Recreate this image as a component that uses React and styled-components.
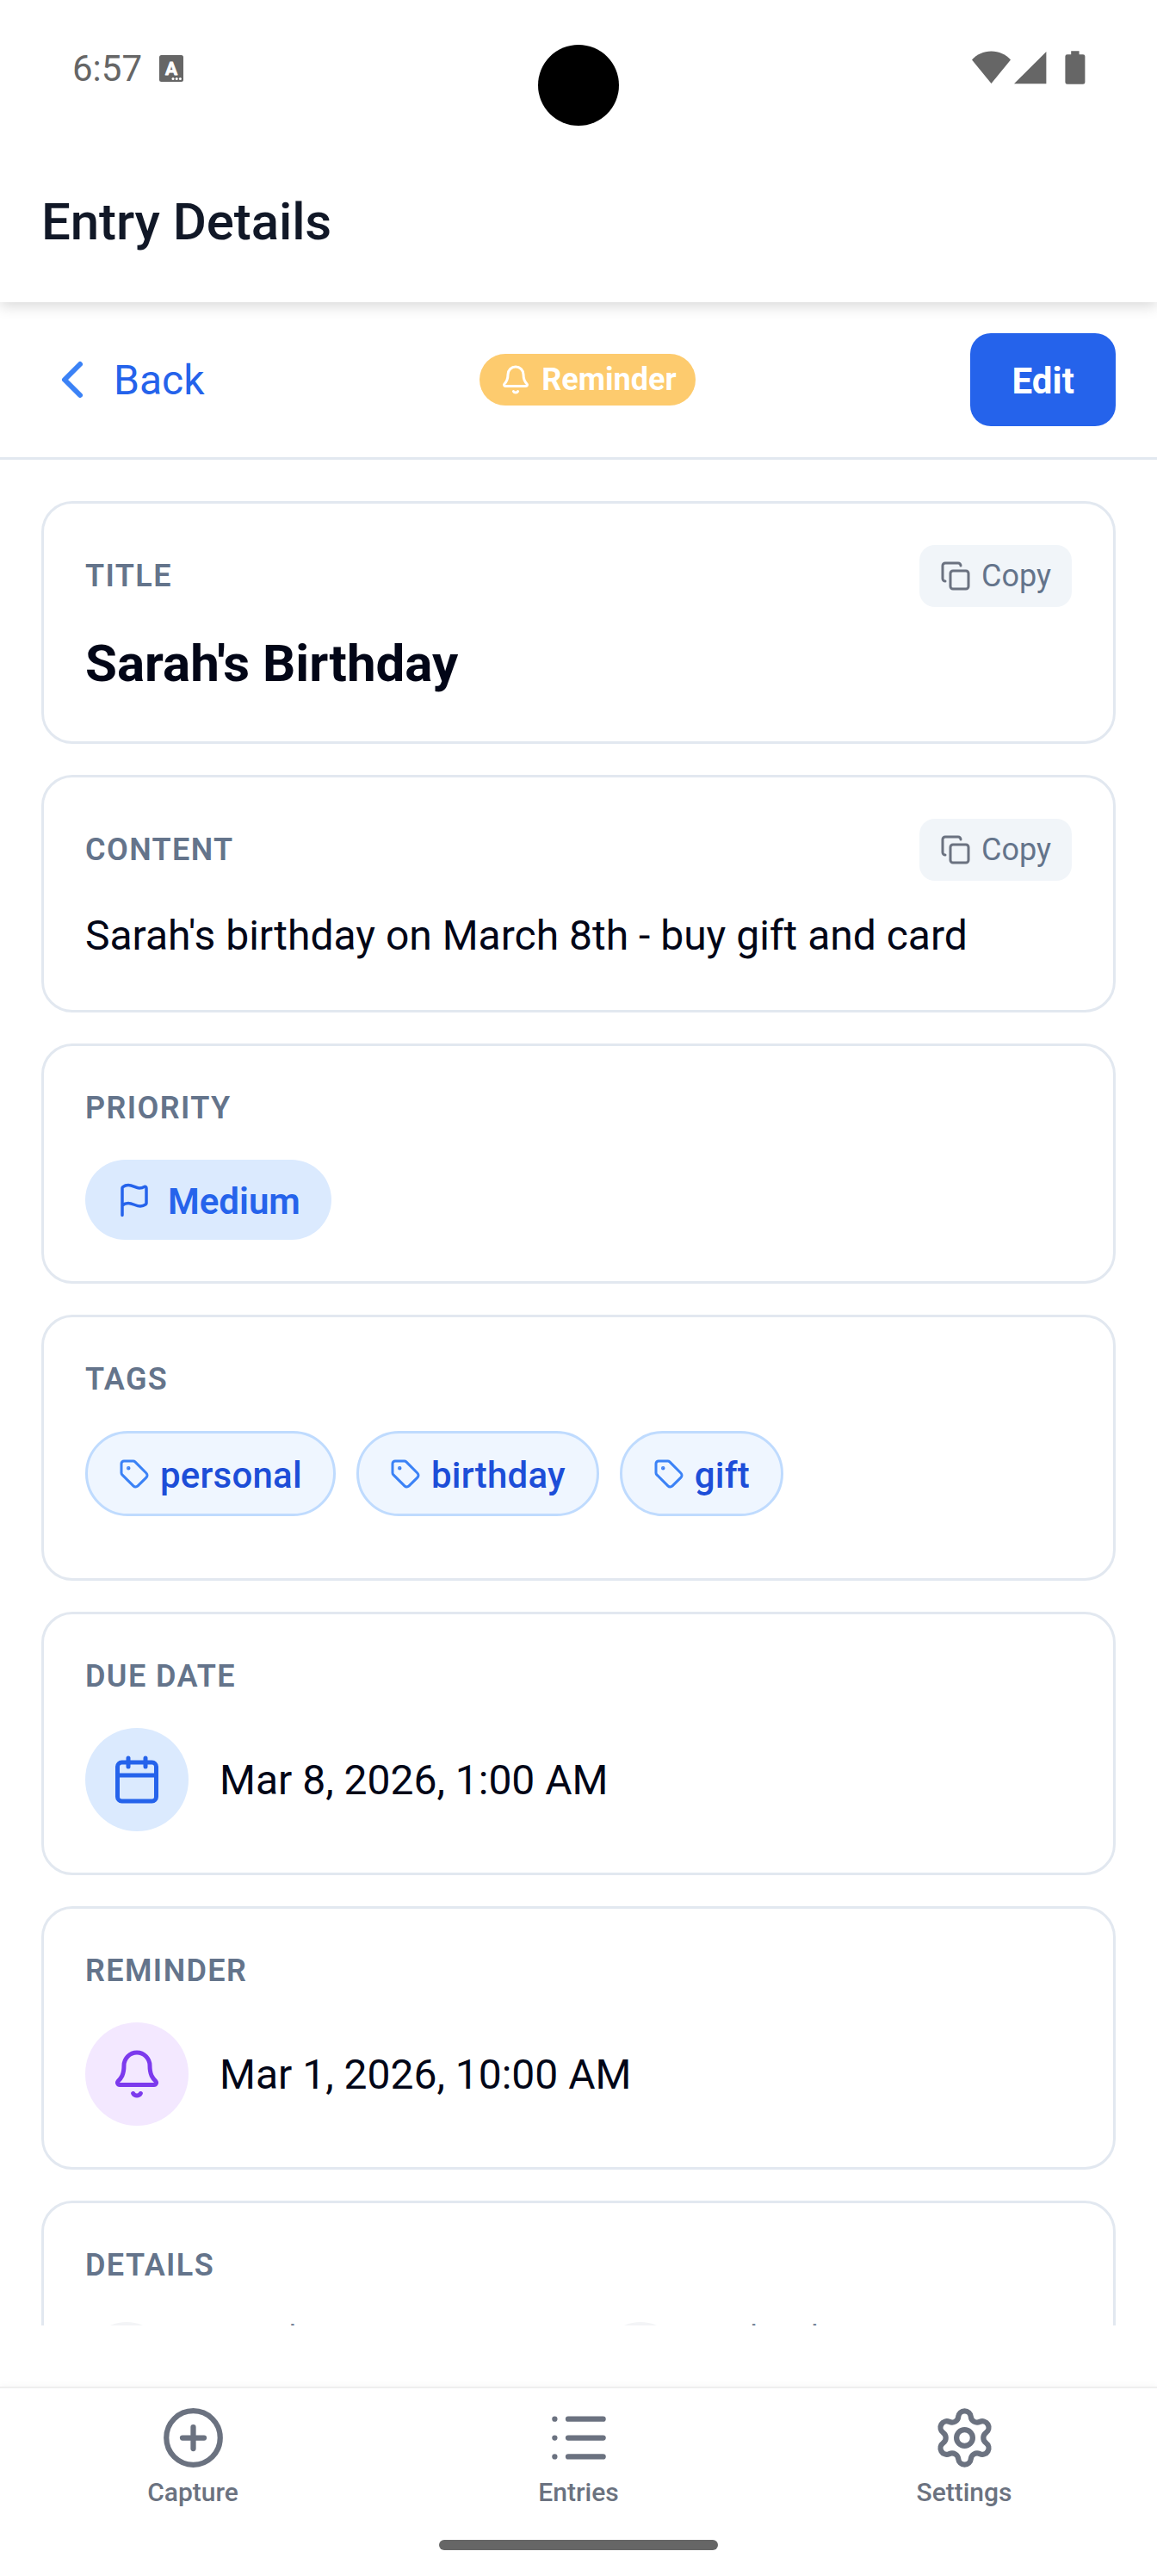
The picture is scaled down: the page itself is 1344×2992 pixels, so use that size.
import React from 'react'
import styled, { createGlobalStyle } from 'styled-components'
import { Bell, Calendar, ChevronLeft, CirclePlus, Copy, Flag, List, Settings, Tag } from 'lucide-react'

const GlobalStyle = createGlobalStyle`
    * {
        box-sizing: border-box;
    }
    body {
        margin: 0;
        background: #ffffff;
        font-family: Roboto, "Liberation Sans", sans-serif;
    }
    svg {
        display: block;
        flex-shrink: 0;
    }
`

const tags = ['personal', 'birthday', 'gift']

const tabs = [
    { label: 'Capture', Icon: CirclePlus },
    { label: 'Entries', Icon: List },
    { label: 'Settings', Icon: Settings },
]

// wifi, signal, battery
const StatusIcons = () => (
    <svg width="132" height="40" viewBox="0 0 132 40" fill="#666666">
        <path d="M0 10.6C5.6 4.2 13.4 0.5 22.5 0.5S39.4 4.2 45 10.6L22.5 38Z" />
        <path d="M49 38.2L86.4 1V38.2Z" />
        <path d="M115.2 0.2h9.4v4h4.4a2.4 2.4 0 0 1 2.4 2.4v29.8a2.4 2.4 0 0 1-2.4 2.4h-18.2a2.4 2.4 0 0 1-2.4-2.4V6.6a2.4 2.4 0 0 1 2.4-2.4h4.4z" />
    </svg>
)

const KeyboardIcon = () => (
    <svg width="28" height="31" viewBox="0 0 28 31">
        <rect width="28" height="31" rx="2.5" fill="#666666" />
        <S.IconLetter x="14" y="22.6" textAnchor="middle">A</S.IconLetter>
        <circle cx="16" cy="27.6" r="1.5" fill="#ffffff" />
        <circle cx="20.2" cy="27.6" r="1.5" fill="#ffffff" />
        <circle cx="24.4" cy="27.6" r="1.5" fill="#ffffff" />
    </svg>
)

const CopyAction = () => (
    <S.CopyButton>
        <Copy size={36} color="#6b7280" />
        Copy
    </S.CopyButton>
)

const App = () => (
    <S.Screen>
        <GlobalStyle />
        <S.Header>
            <S.StatusBar>
                <S.Clock>6:57</S.Clock>
                <KeyboardIcon />
                <S.Camera />
                <S.StatusRight><StatusIcons /></S.StatusRight>
            </S.StatusBar>
            <S.PageTitle>Entry Details</S.PageTitle>
        </S.Header>

        <S.Toolbar>
            <S.BackButton>
                <ChevronLeft size={72} color="#3b82f6" />
                <S.Caption $drop={2}>Back</S.Caption>
            </S.BackButton>
            <S.TypeBadge>
                <Bell size={36} />
                Reminder
            </S.TypeBadge>
            <S.EditButton><S.Caption $drop={2}>Edit</S.Caption></S.EditButton>
        </S.Toolbar>

        <S.Content>
            <S.Card>
                <S.CardHead>
                    <S.Label>TITLE</S.Label>
                    <CopyAction />
                </S.CardHead>
                <S.EntryTitle>Sarah's Birthday</S.EntryTitle>
            </S.Card>

            <S.Card>
                <S.CardHead>
                    <S.Label>CONTENT</S.Label>
                    <CopyAction />
                </S.CardHead>
                <S.EntryText>Sarah's birthday on March 8th - buy gift and card</S.EntryText>
            </S.Card>

            <S.Card>
                <S.Label $spaced>PRIORITY</S.Label>
                <S.Priority>
                    <Flag size={42} />
                    <S.Caption $drop={4}>Medium</S.Caption>
                </S.Priority>
            </S.Card>

            <S.Card>
                <S.Label $spaced>TAGS</S.Label>
                <S.TagList>
                    {tags.map(tag => (
                        <S.TagChip key={tag}>
                            <Tag size={36} color="#3b82f6" />
                            <S.Caption $drop={4}>{tag}</S.Caption>
                        </S.TagChip>
                    ))}
                </S.TagList>
            </S.Card>

            <S.Card>
                <S.Label $spaced>DUE DATE</S.Label>
                <S.DateRow>
                    <S.Round $size={120} $bg="#dbeafe"><Calendar size={60} color="#2563eb" /></S.Round>
                    <S.Caption $drop={1}>Mar 8, 2026, 1:00 AM</S.Caption>
                </S.DateRow>
            </S.Card>

            <S.Card>
                <S.Label $spaced>REMINDER</S.Label>
                <S.DateRow>
                    <S.Round $size={120} $bg="#f3e8ff"><Bell size={60} color="#7c3aed" /></S.Round>
                    <S.Caption $drop={1}>Mar 1, 2026, 10:00 AM</S.Caption>
                </S.DateRow>
            </S.Card>

            <S.Card>
                <S.Label $spaced>DETAILS</S.Label>
                <S.DetailGrid>
                    <S.Detail>
                        <S.Round $size={96} $bg="#f3f4f6" />
                        <S.DetailLabel>Created</S.DetailLabel>
                    </S.Detail>
                    <S.Detail>
                        <S.Round $size={96} $bg="#f3f4f6" />
                        <S.DetailLabel>Updated</S.DetailLabel>
                    </S.Detail>
                </S.DetailGrid>
            </S.Card>
        </S.Content>

        <S.TabBar>
            <S.Tabs>
                {tabs.map(({ label, Icon }) => (
                    <S.Tab key={label}>
                        <Icon size={75} />
                        {label}
                    </S.Tab>
                ))}
            </S.Tabs>
            <S.HomeHandle />
        </S.TabBar>
    </S.Screen>
)

export default App

const S = {
    Screen: styled.div`
        width: 1344px;
        height: 2992px;
        display: flex;
        flex-direction: column;
        overflow: hidden;
        background: #ffffff;
    `,
    Header: styled.header`
        height: 351px;
        flex-shrink: 0;
        position: relative;
        z-index: 1;
        background: #ffffff;
        box-shadow: 0 4px 16px rgba(0, 0, 0, 0.16);
    `,
    StatusBar: styled.div`
        position: relative;
        height: 159px;
        padding: 0 83px 0 84px;
        display: flex;
        align-items: center;
        svg {
            margin-bottom: 1px;
        }
    `,
    Clock: styled.span`
        font-size: 42px;
        line-height: 50px;
        width: 101px;
        color: #666666;
    `,
    IconLetter: styled.text`
        font-size: 21px;
        font-weight: 700;
        fill: #ffffff;
        stroke: #ffffff;
        stroke-width: 0.8px;
        stroke-linejoin: round;
    `,
    Camera: styled.div`
        position: absolute;
        left: 625px;
        top: 52px;
        width: 94px;
        height: 94px;
        border-radius: 50%;
        background: #000000;
    `,
    StatusRight: styled.div`
        margin-left: auto;
    `,
    PageTitle: styled.h1`
        margin: 63px 0 0 48px;
        font-size: 60px;
        font-weight: 500;
        line-height: 72px;
        letter-spacing: -0.1px;
        color: #111827;
    `,
    Toolbar: styled.div`
        height: 183px;
        flex-shrink: 0;
        padding: 0 48px;
        display: flex;
        align-items: center;
        justify-content: space-between;
        border-bottom: 3px solid #e2e8f0;
    `,
    Caption: styled.span`
        padding-top: ${props => props.$drop}px;
    `,
    BackButton: styled.div`
        display: flex;
        align-items: center;
        gap: 12px;
        font-size: 48px;
        line-height: 72px;
        color: #2563eb;
    `,
    TypeBadge: styled.div`
        height: 60px;
        padding: 0 22px 0 24px;
        display: flex;
        align-items: center;
        gap: 12px;
        border-radius: 30px;
        background: #fdcb6e;
        font-size: 36px;
        font-weight: 700;
        color: #ffffff;
    `,
    EditButton: styled.div`
        height: 108px;
        padding: 0 48px;
        display: flex;
        align-items: center;
        border-radius: 24px;
        background: #2563eb;
        font-size: 42px;
        font-weight: 700;
        letter-spacing: 0.1px;
        color: #ffffff;
    `,
    Content: styled.main`
        height: 2167px;
        flex-shrink: 0;
        padding: 48px 48px 0;
        display: flex;
        flex-direction: column;
        gap: 36px;
        overflow: hidden;
    `,
    Card: styled.section`
        flex-shrink: 0;
        padding: 48px;
        border: 3px solid #e2e8f0;
        border-radius: 36px;
    `,
    CardHead: styled.div`
        display: flex;
        align-items: center;
        justify-content: space-between;
        margin-bottom: 24px;
    `,
    Label: styled.div`
        font-size: 36px;
        font-weight: 600;
        line-height: 48px;
        letter-spacing: 1.4px;
        color: #64748b;
        margin-bottom: ${props => (props.$spaced ? '36px' : '0')};
    `,
    CopyButton: styled.div`
        height: 72px;
        padding: 0 24px;
        display: flex;
        align-items: center;
        gap: 12px;
        border-radius: 18px;
        background: #f1f5f9;
        font-size: 36px;
        color: #64748b;
    `,
    EntryTitle: styled.div`
        font-size: 60px;
        font-weight: 700;
        line-height: 84px;
        color: #020617;
    `,
    EntryText: styled.div`
        padding-top: 1px;
        margin-bottom: -1px;
        font-size: 48px;
        line-height: 78px;
        color: #020617;
    `,
    Priority: styled.div`
        width: fit-content;
        height: 93px;
        padding: 0 36px;
        display: flex;
        align-items: center;
        gap: 18px;
        border-radius: 47px;
        background: #dbeafe;
        font-size: 42px;
        font-weight: 600;
        color: #2563eb;
    `,
    TagList: styled.div`
        display: flex;
        gap: 24px;
        margin-bottom: 24px;
    `,
    TagChip: styled.div`
        height: 99px;
        padding: 0 36px;
        display: flex;
        align-items: center;
        gap: 12px;
        border: 3px solid #bfdbfe;
        border-radius: 50px;
        background: #eff6ff;
        font-size: 42px;
        font-weight: 500;
        letter-spacing: 0.22px;
        color: #1d4ed8;
    `,
    DateRow: styled.div`
        display: flex;
        align-items: center;
        gap: 36px;
        font-size: 48px;
        color: #020617;
    `,
    Round: styled.div`
        width: ${props => props.$size}px;
        height: ${props => props.$size}px;
        flex-shrink: 0;
        display: flex;
        align-items: center;
        justify-content: center;
        border-radius: 50%;
        background: ${props => props.$bg};
    `,
    DetailGrid: styled.div`
        display: grid;
        grid-template-columns: 1fr 1fr;
        column-gap: 48px;
    `,
    Detail: styled.div`
        height: 108px;
        display: flex;
        align-items: center;
        gap: 24px;
    `,
    DetailLabel: styled.div`
        align-self: flex-start;
        font-size: 36px;
        line-height: 48px;
        color: #64748b;
    `,
    TabBar: styled.nav`
        height: 220px;
        flex-shrink: 0;
        margin-top: auto;
        padding-top: 19px;
        border-top: 2px solid #efefef;
        box-shadow: 0 -1px 8px rgba(0, 0, 0, 0.04);
    `,
    Tabs: styled.div`
        display: grid;
        grid-template-columns: repeat(3, 1fr);
    `,
    Tab: styled.div`
        height: 157px;
        padding-top: 1px;
        display: flex;
        flex-direction: column;
        align-items: center;
        gap: 8px;
        font-size: 30px;
        font-weight: 500;
        line-height: 36px;
        color: #6b7280;
    `,
    HomeHandle: styled.div`
        width: 324px;
        height: 12px;
        margin: 0 auto;
        border-radius: 6px;
        background: #666666;
    `,
}
